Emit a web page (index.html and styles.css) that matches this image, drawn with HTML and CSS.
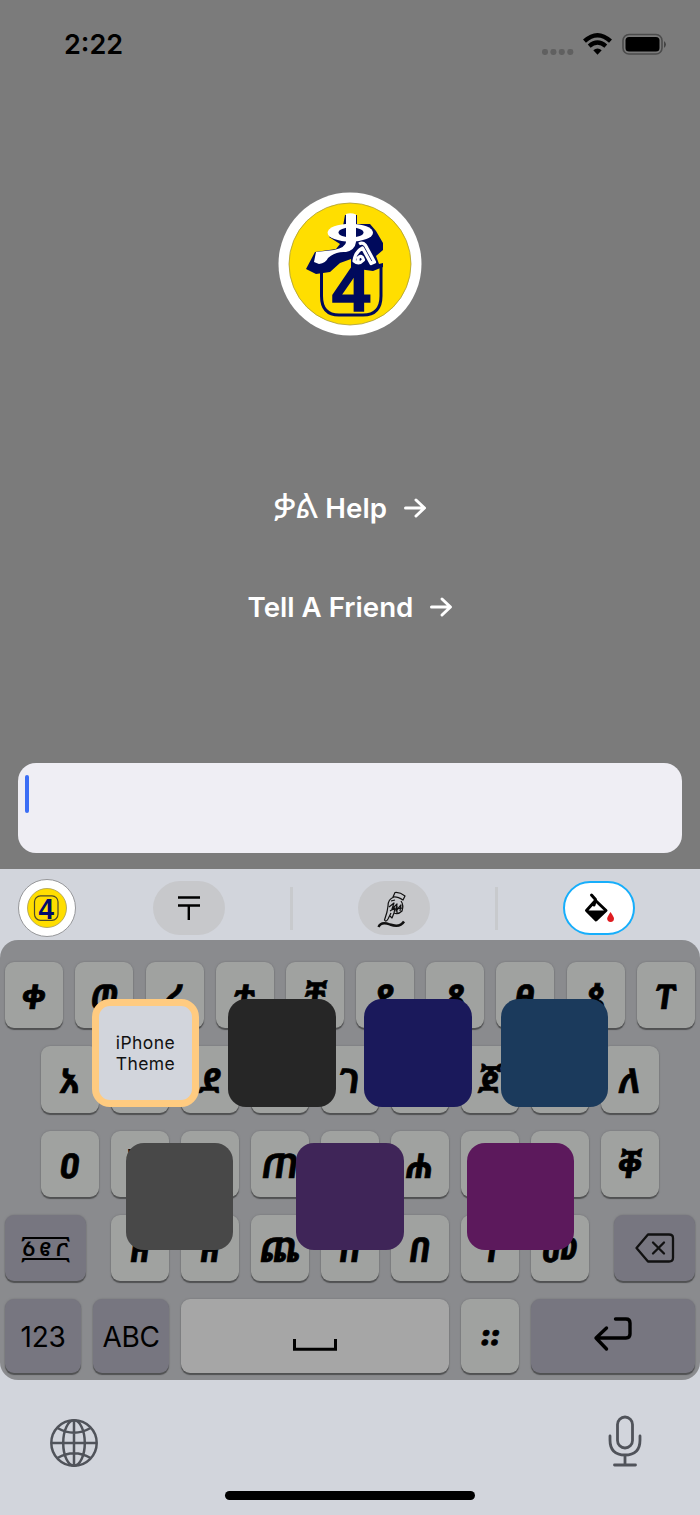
FILE: index.html
```html
<!DOCTYPE html>
<html lang="am">
<head>
<meta charset="utf-8">
<title>ቃል Keyboard</title>
<link rel="stylesheet" href="styles.css">
</head>
<body>
<div class="phone">
  <header class="status">
    <span class="time">2:22</span>
    <svg class="status-icons" width="126" height="30" viewBox="0 0 126 30">
      <g fill="#606060"><rect x="2" y="16" width="6" height="6" rx="2.400"/><rect x="10.400" y="16" width="6" height="6" rx="2.400"/><rect x="18.800" y="16" width="6" height="6" rx="2.400"/><rect x="27.300" y="16" width="6" height="6" rx="2.400"/></g>
      <g fill="none" stroke="#000" stroke-width="4.300"><path d="M44.500 8.200Q57.500-3.800 70.500 8.200"/><path d="M49.200 13.200Q57.500 6 65.800 13.200"/></g>
      <path d="M53.300 17.200Q57.500 13.600 61.700 17.200L57.500 21.800Z"/>
      <rect x="83" y="1.500" width="39" height="19.500" rx="6" fill="none" stroke="#4b4b4b" stroke-width="1.600"/>
      <rect x="85.500" y="4" width="34" height="14.500" rx="3.500"/>
      <path d="M124 8Q128 11.500 124 15Z" fill="#444"/>
    </svg>
  </header>

  <svg class="logo" width="144" height="144" viewBox="0 0 144 144">
    <circle cx="72" cy="72" r="71.500" fill="#fff"/>
    <circle cx="72" cy="72" r="61" fill="#ffde00" stroke="#a89c3a" stroke-width=".8"/>
    <path d="M43.500 78V104Q43.500 123 61 123H85Q103 123 103 104V74" fill="none" stroke="#000a5c" stroke-width="3"/>
    <text class="logo-four" x="54" y="118.500" textLength="38" lengthAdjust="spacingAndGlyphs">4</text>
    <path d="M67 23H79V32H92L98 39L105 51V58L98 64L101 72L105 71V75L95 79L73 76V67L62 71L52 80L38 82L28 77L37 60L58 57L62 52L51 45L60 34H65Z" fill="#000a5c"/>
    <ellipse cx="72.300" cy="40.700" rx="22.700" ry="9" fill="#fff"/>
    <ellipse cx="73" cy="40.500" rx="12.500" ry="5" fill="#000a5c"/>
    <path d="M68 22Q73 20.500 78 22.500V50Q77 58 68 60Q58 59 50 66Q48 71 41 72L36 70L38 60L56 58Q68 55 68 50Z" fill="#fff"/>
    <path d="M81 52Q86 49 89 56L96.500 70L93 71.500L84.500 56Q77 60 76 69Q81 73 85.500 68Q84 62 80 66V70" fill="none" stroke="#fff" stroke-width="3.200" stroke-linejoin="round"/>
  </svg>

  <nav class="links">
    <a class="link"><span><span class="eth">ቃል</span> Help</span><svg width="22" height="20" viewBox="0 0 22 20"><path d="M1.500 10H20M12 2l8.500 8L12 18"/></svg></a>
    <a class="link"><span>Tell A Friend</span><svg width="22" height="20" viewBox="0 0 22 20"><path d="M1.500 10H20M12 2l8.500 8L12 18"/></svg></a>
  </nav>

  <div class="input"><i class="caret"></i></div>

  <section class="keyboard">
    <div class="toolbar">
      <svg class="badge" width="58" height="58" viewBox="0 0 58 58">
        <circle cx="29" cy="29" r="28.500" fill="#fff" stroke="#96979a"/>
        <circle cx="29" cy="29" r="19.500" fill="#ffde00" stroke="#a69b58" stroke-width=".8"/>
        <rect x="16.500" y="16.800" width="23.500" height="24.500" rx="6" fill="none" stroke="#4c492a" stroke-width="1.200"/>
        <text class="badge-four" x="20.600" y="39.600" textLength="15.500" lengthAdjust="spacingAndGlyphs">4</text>
      </svg>
      <button class="pill pill-first"><svg width="24" height="26" viewBox="0 0 24 26"><path d="M1 2.500H23M1 10.500H23M11.800 10.500V25" fill="none" stroke="#000" stroke-width="2.400"/></svg></button>
      <i class="divider"></i>
      <button class="pill"><svg class="hand" width="30" height="38" viewBox="0 0 30 38" fill="none" stroke="#111" stroke-width="1.200" stroke-linejoin="round">
        <path d="M18 1.500Q23 1 28 5L26 9Q20 5 16 6ZM17 6Q11 8 11 15L10 21L7.500 29Q9 31.500 11 28L14 22M24 10Q27 14 25 20Q21 24 17 22L15 27L13 25M12 16L17 12L15 18L20 13L19 20L24 14L23 20M14 10L18 9M14 19L25 17M13 20L18 17L17 22M20 15V22"/>
        <path d="M1.500 36Q4 30 13 33.500Q23 37 27 30.500" stroke-width="2.400"/>
      </svg></button>
      <i class="divider"></i>
      <button class="pill pill-active"><svg width="32" height="30" viewBox="0 0 32 30">
        <path d="M8.500 2L12.500 6.500L11 12M12.500 7.500L23 17.500L13 27L3.500 17.500Z" fill="none" stroke="#000" stroke-width="3" stroke-linejoin="round" stroke-linecap="round"/>
        <path d="M3 17.500H23L13 27.500Z"/><path d="M27.500 19Q31 24 31 25.500A3.400 3.400 0 0 1 24.200 25.500Q24.200 24 27.500 19Z" fill="#df1c20"/>
      </svg></button>
    </div>

    <div class="board">
      <div class="row"><b class="key"><span>ቀ</span></b><b class="key"><span>ወ</span></b><b class="key"><span>ረ</span></b><b class="key"><span>ተ</span></b><b class="key"><span>ቸ</span></b><b class="key"><span>የ</span></b><b class="key"><span>ጸ</span></b><b class="key"><span>ፀ</span></b><b class="key"><span>ጰ</span></b><b class="key"><span>ፐ</span></b></div>
      <div class="row inner"><b class="key"><span>አ</span></b><b class="key"></b><b class="key"><span>ደ</span></b><b class="key"></b><b class="key"><span>ገ</span></b><b class="key"></b><b class="key"><span>ጀ</span></b><b class="key"></b><b class="key"><span>ለ</span></b></div>
      <div class="row inner"><b class="key"><span>ዐ</span></b><b class="key"><span>ኸ</span></b><b class="key"></b><b class="key"><span>ጠ</span></b><b class="key"></b><b class="key"><span>ሐ</span></b><b class="key"></b><b class="key"></b><b class="key"><span>ቐ</span></b></div>
      <div class="row row-ends">
        <b class="key dark wide numerals">፩፪፫</b>
        <div class="row inner"><b class="key"><span>ዘ</span></b><b class="key"><span>ዘ</span></b><b class="key"><span>ጨ</span></b><b class="key"><span>ሰ</span></b><b class="key"><span>በ</span></b><b class="key"><span>ነ</span></b><b class="key"><span>መ</span></b></div>
        <b class="key dark wide"><svg width="40" height="30" viewBox="0 0 40 30" fill="none" stroke="#111" stroke-width="2.300" stroke-linejoin="round" stroke-linecap="round"><path d="M13 1.500H34Q38 1.500 38 5V25Q38 28.500 34 28.500H13L1.500 15ZM18 9.500L29 20.500M29 9.500L18 20.500"/></svg></b>
      </div>
      <div class="row row-bottom">
        <b class="key dark latin">123</b><b class="key dark latin">ABC</b>
        <b class="key space"><svg width="44" height="12" viewBox="0 0 44 12"><path d="M1.500 0V10.300H42.500V0" fill="none" stroke="#000" stroke-width="3"/></svg></b>
        <b class="key stop"><span>።</span></b>
        <b class="key dark"><svg class="return" width="40" height="36" viewBox="0 0 40 36" fill="none" stroke="#000" stroke-width="3.400" stroke-linejoin="round" stroke-linecap="round"><path d="M22.500 3H33Q37 3 37 7V18Q37 22 33 22H3M13.500 12L3 22L13.500 33"/></svg></b>
      </div>

      <div class="themes">
        <div class="swatches">
          <button class="swatch iphone">iPhone<br>Theme</button><i class="swatch charcoal"></i><i class="swatch navy"></i><i class="swatch blue"></i>
        </div>
        <div class="swatches lower">
          <i class="swatch gray"></i><i class="swatch violet"></i><i class="swatch magenta"></i>
        </div>
      </div>
    </div>

    <footer class="system">
      <svg width="50" height="50" viewBox="0 0 50 50" fill="none" stroke="#50535a" stroke-width="2.500"><circle cx="25" cy="25" r="22.700"/><ellipse cx="25" cy="25" rx="10.800" ry="22.700"/><path d="M25 2V48M2 25H48M8.500 10Q25 19.500 41.500 10M8.500 40Q25 30.500 41.500 40"/></svg>
      <svg width="34" height="52" viewBox="0 0 34 52" fill="none" stroke="#50535a" stroke-width="2.800" stroke-linecap="round"><rect x="9.500" y="2" width="15" height="31" rx="7.500"/><path d="M2 21V25Q2 40 17 40Q32 40 32 25V21M17 40V50M6.500 50H27.500"/></svg>
    </footer>
    <i class="home"></i>
  </section>
</div>
</body>
</html>
```
FILE: styles.css
```css
* { box-sizing: border-box; }
body { margin: 0; }
.phone {
  width: 700px; height: 1515px; overflow: hidden;
  display: flex; flex-direction: column;
  background: #7b7b7b;
  font-family: Inter, "Noto Sans Ethiopic", "Abyssinica SIL", sans-serif;
}
button { padding: 0; border: 0; font: inherit; }
svg { display: block; overflow: visible; flex: none; }

.status { height: 192px; padding: 29px 34px 0 64px; display: flex; justify-content: space-between; align-items: flex-start; }
.time { font-size: 27px; line-height: 32px; font-weight: 600; }
.status-icons { margin-top: 4px; }

.logo { align-self: center; }
.logo-four { font: bold 64px "Liberation Sans", sans-serif; fill: #000a5c; stroke: #000a5c; stroke-width: 1.500px; }

.links { height: 427px; padding-top: 154px; display: flex; flex-direction: column; align-items: center; gap: 62.500px; }
.link { display: flex; align-items: center; gap: 17px; color: #fff; font-size: 27.700px; line-height: 36px; height: 36px; font-weight: 600; white-space: nowrap; }
.link path { fill: none; stroke: #fff; stroke-width: 3; stroke-linecap: round; stroke-linejoin: round; }
.eth { font-weight: 400; font-size: 34.500px; line-height: 30px; }

.input { height: 90px; margin: 0 18px; padding: 12px 7px; border-radius: 18px; background: #efeef4; }
.caret { display: block; width: 4px; height: 38px; border-radius: 2px; background: #3b6ef5; }

.keyboard { margin-top: 16px; height: 646px; background: #d2d5dc; display: flex; flex-direction: column; }
.toolbar { height: 71px; padding: 7px 65px 0 18px; display: flex; align-items: center; justify-content: space-between; }
.badge-four { font: bold 30px "Liberation Sans", sans-serif; fill: #000a6c; }
.pill { width: 72px; height: 54px; border-radius: 27px; background: #c7c8cb; display: flex; align-items: center; justify-content: center; }
.pill-first { margin-left: 12px; }
.pill-active { background: #fff; border: 2px solid #16aefb; }
.hand { margin: 4px 5px 0 0; }
.divider { width: 3px; height: 43px; background: #c8cacd; }

.board {
  position: relative; height: 440px; padding: 22px 5px 7px;
  border-radius: 18px; background: #8a8b8e;
  display: flex; flex-direction: column; gap: 18px;
}
.row { display: flex; justify-content: center; gap: 12.200px; }
.inner { gap: 12px; }
.row-ends { justify-content: space-between; }
.row-bottom { display: grid; grid-template-columns: 76px 76px 268px 58px 164px; gap: 12px; }
.row-bottom .key { width: auto; height: 74px; }
.key {
  width: 58px; height: 66.300px; border-radius: 9px;
  display: flex; align-items: center; justify-content: center;
  background: #a0a2a0; color: #000;
  font: bold 34px/1 "Noto Sans Ethiopic", "Abyssinica SIL", "Noto Serif Ethiopic", serif;
  box-shadow: 0 2px 1px #505152, 0 0 2px #6e6f72;
}
.key span { margin-top: 2px; transform: skewX(-8deg); -webkit-text-stroke: .7px #000; }
.wide { width: 81px; }
.dark { background: #777680; }
.numerals { font-size: 29px; font-weight: 400; }
.latin { font: 400 28px/1 Inter, sans-serif; letter-spacing: -.3px; padding-top: 2px; }
.space { background: #a6a6a6; }
.space svg { margin-top: 18px; }
.return { margin-top: -4px; }

.themes { position: absolute; inset: 59px 0 0; display: flex; flex-direction: column; gap: 36px; align-items: center; }
.swatches { display: flex; gap: 28.900px; }
.lower { gap: 63px; }
.swatch { width: 107.500px; height: 107.500px; border-radius: 18px; }
.iphone { border: 7px solid #ffcb80; background: #d2d5dc; color: #111; font-size: 17.500px; line-height: 21px; letter-spacing: .4px; }
.charcoal { background: #262626; }
.navy { background: #1a195b; }
.blue { background: #1b3a5c; }
.gray { background: #484848; }
.violet { background: #3f2558; }
.magenta { background: #5c195c; }

.system { height: 115px; padding: 35px 58px 0 49px; display: flex; justify-content: space-between; align-items: flex-start; }
.system svg:first-child { margin-top: 3px; }
.home { width: 250px; height: 9px; margin: -4px auto 0; border-radius: 5px; background: #000; }
```
